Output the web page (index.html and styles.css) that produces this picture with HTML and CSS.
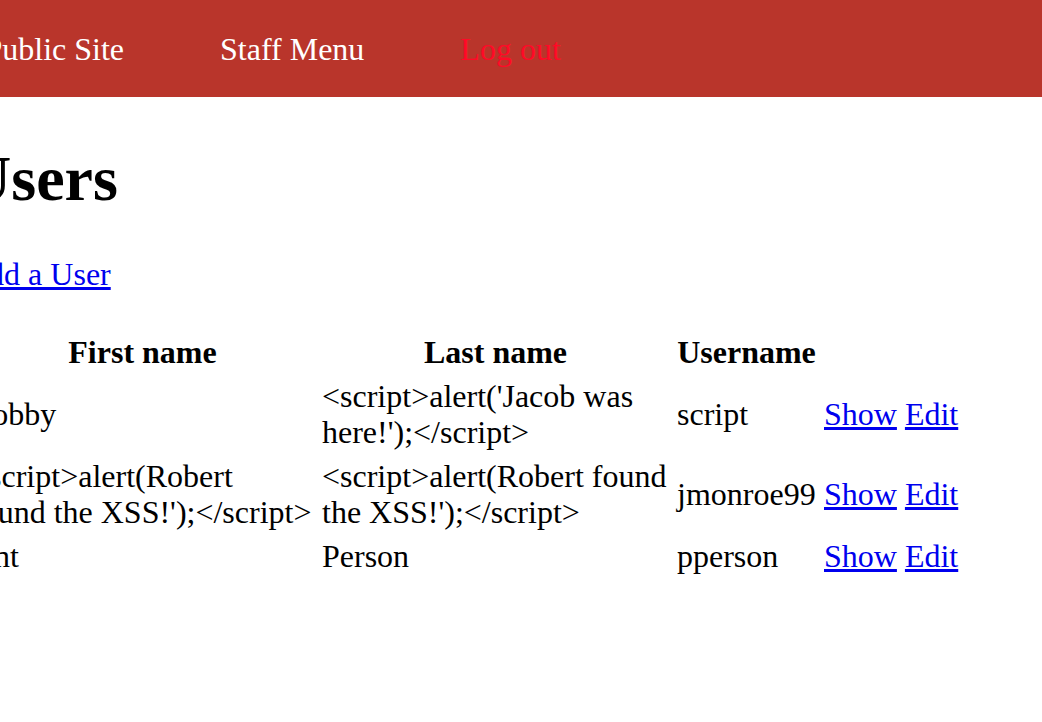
FILE: index.html
```html
<!DOCTYPE html>
<html lang="en">
<head>
<meta charset="utf-8">
<title>Users</title>
<link rel="stylesheet" href="styles.css">
</head>
<body>
<header class="site-header">
  <nav class="main-nav">
    <a class="nav-link" href="#">Public Site</a>
    <a class="nav-link" href="#">Staff Menu</a>
    <a class="nav-link nav-link--logout" href="#">Log out</a>
  </nav>
</header>
<main class="content">
  <h1 class="page-title">Users</h1>
  <p class="actions"><a class="link" href="#">Add a User</a></p>
  <table class="list">
    <thead>
      <tr>
        <th class="col-first">First name</th>
        <th class="col-last">Last name</th>
        <th class="col-user">Username</th>
        <th class="col-actions"></th>
      </tr>
    </thead>
    <tbody>
      <tr>
        <td>Bobby</td>
        <td>&lt;script&gt;alert('Jacob was here!');&lt;/script&gt;</td>
        <td>script</td>
        <td class="cell-actions"><a class="link" href="#">Show</a> <a class="link" href="#">Edit</a></td>
      </tr>
      <tr>
        <td>&lt;script&gt;alert(Robert found the XSS!');&lt;/script&gt;</td>
        <td>&lt;script&gt;alert(Robert found the XSS!');&lt;/script&gt;</td>
        <td>jmonroe99</td>
        <td class="cell-actions"><a class="link" href="#">Show</a> <a class="link" href="#">Edit</a></td>
      </tr>
      <tr>
        <td>Ant</td>
        <td>Person</td>
        <td>pperson</td>
        <td class="cell-actions"><a class="link" href="#">Show</a> <a class="link" href="#">Edit</a></td>
      </tr>
    </tbody>
  </table>
</main>
</body>
</html>
```
FILE: styles.css
```css
html, body {
  margin: 0;
  padding: 0;
  background: #ffffff;
}

body {
  font-family: "Liberation Serif", "Times New Roman", serif;
  font-size: 32px;
  line-height: 36px;
  color: #000000;
  overflow: hidden;
}

.site-header {
  background: #b9352b;
  padding: 31px 0 30px;
}

.main-nav {
  display: flex;
  gap: 96px;
  margin-left: -15.5px;
}

.nav-link {
  color: #ffffff;
  text-decoration: none;
  white-space: nowrap;
}

.nav-link--logout {
  color: #ff0a26;
}

.content {
  margin-left: -35px;
}

.page-title {
  font-size: 64px;
  line-height: 72px;
  font-weight: bold;
  margin: 46px 0 41px;
}

.actions {
  margin: 0 0 36px;
}

.link {
  color: #0000ee;
  text-decoration: underline;
}

.list {
  table-layout: fixed;
  width: 1013px;
  border-spacing: 4px;
  border-collapse: separate;
}

.list th,
.list td {
  padding: 2px;
  vertical-align: middle;
}

.list th {
  font-weight: bold;
  text-align: center;
}

.list td {
  text-align: left;
}

.list .cell-actions {
  white-space: nowrap;
}

.col-first { width: 343px; }
.col-last { width: 347px; }
.col-user { width: 139px; }
.col-actions { width: 148px; }
```
